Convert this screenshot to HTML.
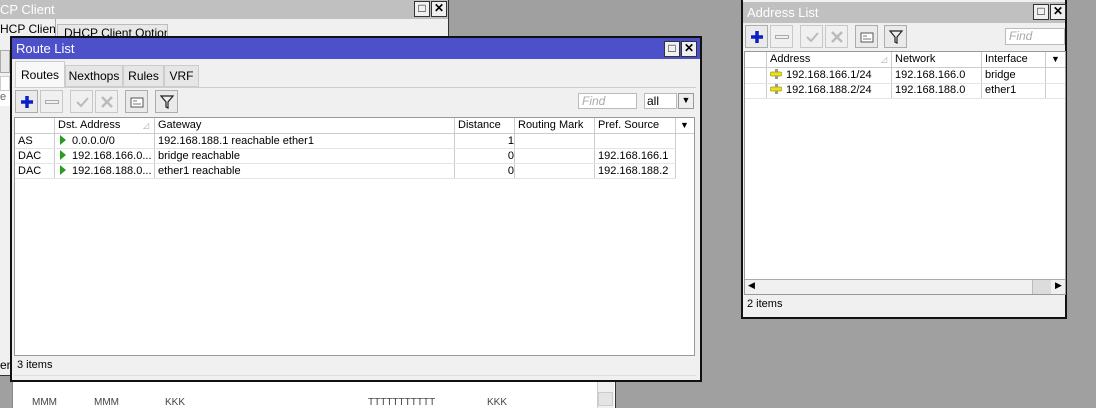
<!DOCTYPE html>
<html><head><meta charset="utf-8"><style>
*{box-sizing:border-box;margin:0;padding:0}
body{width:1096px;height:406px;background:#a0a0a0;position:relative;overflow:hidden;font-family:"Liberation Sans",sans-serif;font-size:11px;color:#000}
.a{position:absolute;white-space:nowrap}
.btnw{position:absolute;width:16px;height:16px;border:1px solid #333;background:#f0f0f0;font-size:12px;line-height:13px;text-align:center;font-weight:bold}
.tb{position:absolute;width:23px;height:23px;border:1px solid #adadad;background:#eaeaea;display:flex;align-items:center;justify-content:center}
.tb.d{background:#f0f0f0;border-color:#c8c8c8}
.cell{position:absolute;white-space:nowrap;overflow:hidden;height:15px;line-height:15px;padding-left:3px}
.hl{border-right:1px solid #ccc}
.tri{display:inline-block;width:0;height:0;border-top:5px solid transparent;border-bottom:5px solid transparent;border-left:6px solid #2a9c1f;vertical-align:-1px;margin:0 6px 0 2px}
</style></head><body>

<!-- bottom background window -->
<div class="a" style="left:12px;top:378px;width:604px;height:30px;background:#fff;border-left:1px solid #888;border-right:1px solid #333"></div>
<div class="a" style="left:597px;top:378px;width:17px;height:30px;background:#f0f0f0;border-left:1px solid #ccc"></div>
<div class="a" style="left:598px;top:392px;width:15px;height:14px;background:#e4e4e4;border:1px solid #ccc"></div>
<div class="a" style="left:32px;top:397px;font-size:10px;color:#444">MMM</div>
<div class="a" style="left:94px;top:397px;font-size:10px;color:#444">MMM</div>
<div class="a" style="left:165px;top:397px;font-size:10px;color:#444">KKK</div>
<div class="a" style="left:368px;top:397px;font-size:10px;color:#444">TTTTTTTTTTT</div>
<div class="a" style="left:487px;top:397px;font-size:10px;color:#444">KKK</div>

<!-- DHCP client window -->
<div class="a" style="left:-2px;top:0;width:451px;height:376px;background:#f0f0f0;border:1px solid #333"></div>
<div class="a" style="left:-1px;top:0;width:449px;height:19px;background:#c0c0c0"></div>
<div class="a" style="left:0;top:1px;color:#fff;font-size:13px;line-height:17px">CP Client</div>
<div class="btnw" style="left:414px;top:1px">□</div>
<div class="btnw" style="left:431px;top:1px">✕</div>
<div class="a" style="left:0;top:19px;width:56px;height:20px;background:#f0f0f0;border-right:1px solid #aaa;font-size:12px;line-height:20px;overflow:hidden">HCP Client</div>
<div class="a" style="left:57px;top:24px;width:111px;height:14px;background:#e8e8e8;border:1px solid #bbb;font-size:12px;padding-left:6px;line-height:16px;overflow:hidden">DHCP Client Options</div>
<div class="a" style="left:0;top:50px;width:10px;height:23px;border:1px solid #aaa;background:#e8e8e8"></div>
<div class="a" style="left:0;top:76px;width:10px;height:15px;border:1px solid #ccc;background:#fff"></div>
<div class="a" style="left:0;top:91px;width:10px;height:15px;background:#fff;color:#666;font-size:11px">e</div>
<div class="a" style="left:0;top:358px;font-size:12px">em</div>

<!-- Route List window -->
<div class="a" style="left:10px;top:36px;width:692px;height:346px;background:#f0f0f0;border:2px solid #111"></div>
<div class="a" style="left:12px;top:38px;width:688px;height:21px;background:#4c50c9"></div>
<div class="a" style="left:16px;top:40px;color:#fff;font-size:13px;line-height:17px">Route List</div>
<div class="btnw" style="left:664px;top:41px">□</div>
<div class="btnw" style="left:681px;top:41px">✕</div>
<div class="a" style="left:15px;top:61px;width:50px;height:26px;background:#f8f8f8;border:1px solid #ccc;border-bottom:none;font-size:12px;line-height:26px;text-align:center">Routes</div>
<div class="a" style="left:65px;top:65px;width:58px;height:22px;background:#e6e6e6;border:1px solid #ccc;font-size:12px;line-height:21px;text-align:center">Nexthops</div>
<div class="a" style="left:123px;top:65px;width:41px;height:22px;background:#e6e6e6;border:1px solid #ccc;font-size:12px;line-height:21px;text-align:center">Rules</div>
<div class="a" style="left:164px;top:65px;width:35px;height:22px;background:#e6e6e6;border:1px solid #ccc;font-size:12px;line-height:21px;text-align:center">VRF</div>
<div class="a" style="left:14px;top:87px;width:682px;height:1px;background:#ccc"></div>

<div class="tb" style="left:15px;top:90px"><svg width="14" height="14"><path d="M7 1V13M1 7H13" stroke="#0a1fc4" stroke-width="3.5"/></svg></div>
<div class="tb d" style="left:40px;top:90px"><div style="width:14px;height:4px;border:1px solid #aaa"></div></div>
<div class="tb d" style="left:70px;top:90px"><svg width="14" height="14"><path d="M2 7L6 11L13 3" stroke="#bbb" stroke-width="2" fill="none"/></svg></div>
<div class="tb d" style="left:95px;top:90px"><svg width="14" height="14"><path d="M2 2L12 12M12 2L2 12" stroke="#bbb" stroke-width="2.5"/></svg></div>
<div class="tb" style="left:125px;top:90px"><svg width="14" height="12"><rect x="1" y="2" width="12" height="9" fill="#fff" stroke="#555"/><path d="M3 5H7M3 8H11" stroke="#777"/></svg></div>
<div class="tb" style="left:155px;top:90px"><svg width="14" height="14"><path d="M1 1H13L8 7V13L6 12V7Z" fill="#eee" stroke="#222" stroke-width="1.2"/></svg></div>

<div class="a" style="left:578px;top:93px;width:59px;height:16px;background:#fff;border:1px solid #bbb;color:#aaa;font-style:italic;font-size:12px;padding-left:3px;line-height:14px">Find</div>
<div class="a" style="left:644px;top:93px;width:33px;height:16px;background:#fff;border:1px solid #bbb;font-size:12px;padding-left:2px;line-height:14px">all</div>
<div class="a" style="left:678px;top:93px;width:16px;height:16px;background:#eee;border:1px solid #999;font-size:9px;text-align:center;line-height:13px">&#9660;</div>

<div class="a" style="left:14px;top:117px;width:681px;height:239px;background:#fff;border:1px solid #999"></div>
<div class="a" style="left:15px;top:118px;width:679px;height:16px;background:#fff;border-bottom:1px solid #ccc"></div>
<div class="cell hl" style="left:15px;top:118px;width:40px;height:61px"></div>
<div class="cell hl" style="left:55px;top:118px;width:100px;height:61px">Dst. Address<span style="position:absolute;left:88px;color:#aaa;font-size:8px">◿</span></div>
<div class="cell hl" style="left:155px;top:118px;width:300px;height:61px">Gateway</div>
<div class="cell hl" style="left:455px;top:118px;width:60px;height:61px">Distance</div>
<div class="cell hl" style="left:515px;top:118px;width:80px;height:61px">Routing Mark</div>
<div class="cell hl" style="left:595px;top:118px;width:81px;height:61px">Pref. Source</div>
<div class="a" style="left:680px;top:118px;font-size:9px;line-height:15px">&#9660;</div>
<div class="a" style="left:15px;top:148px;width:661px;height:1px;background:#e4e4e4"></div>
<div class="a" style="left:15px;top:163px;width:661px;height:1px;background:#e4e4e4"></div>
<div class="a" style="left:15px;top:178px;width:661px;height:1px;background:#e4e4e4"></div>

<div class="cell" style="left:15px;top:134px">AS</div>
<div class="cell" style="left:55px;top:134px"><span class="tri"></span>0.0.0.0/0</div>
<div class="cell" style="left:155px;top:134px">192.168.188.1 reachable ether1</div>
<div class="cell" style="left:455px;top:134px;width:59px;text-align:right">1</div>
<div class="cell" style="left:15px;top:149px">DAC</div>
<div class="cell" style="left:55px;top:149px;width:99px"><span class="tri"></span>192.168.166.0...</div>
<div class="cell" style="left:155px;top:149px">bridge reachable</div>
<div class="cell" style="left:455px;top:149px;width:59px;text-align:right">0</div>
<div class="cell" style="left:595px;top:149px">192.168.166.1</div>
<div class="cell" style="left:15px;top:164px">DAC</div>
<div class="cell" style="left:55px;top:164px;width:99px"><span class="tri"></span>192.168.188.0...</div>
<div class="cell" style="left:155px;top:164px">ether1 reachable</div>
<div class="cell" style="left:455px;top:164px;width:59px;text-align:right">0</div>
<div class="cell" style="left:595px;top:164px">192.168.188.2</div>
<div class="a" style="left:17px;top:359px;font-size:11px">3 items</div>
<div class="a" style="left:14px;top:375px;width:682px;height:1px;background:#ddd"></div>

<!-- Address List window -->
<div class="a" style="left:741px;top:0;width:326px;height:319px;background:#f0f0f0;border:2px solid #111;border-top:none"></div>
<div class="a" style="left:743px;top:2px;width:322px;height:21px;background:#c0c0c0"></div>
<div class="a" style="left:747px;top:4px;color:#fff;font-size:13px;line-height:17px">Address List</div>
<div class="btnw" style="left:1033px;top:4px">□</div>
<div class="btnw" style="left:1050px;top:4px">✕</div>
<div class="tb" style="left:745px;top:25px"><svg width="14" height="14"><path d="M7 1V13M1 7H13" stroke="#0a1fc4" stroke-width="3.5"/></svg></div>
<div class="tb d" style="left:770px;top:25px"><div style="width:14px;height:4px;border:1px solid #aaa"></div></div>
<div class="tb d" style="left:800px;top:25px"><svg width="14" height="14"><path d="M2 7L6 11L13 3" stroke="#bbb" stroke-width="2" fill="none"/></svg></div>
<div class="tb d" style="left:825px;top:25px"><svg width="14" height="14"><path d="M2 2L12 12M12 2L2 12" stroke="#bbb" stroke-width="2.5"/></svg></div>
<div class="tb" style="left:855px;top:25px"><svg width="14" height="12"><rect x="1" y="2" width="12" height="9" fill="#fff" stroke="#555"/><path d="M3 5H7M3 8H11" stroke="#777"/></svg></div>
<div class="tb" style="left:884px;top:25px"><svg width="14" height="14"><path d="M1 1H13L8 7V13L6 12V7Z" fill="#eee" stroke="#222" stroke-width="1.2"/></svg></div>
<div class="a" style="left:1005px;top:28px;width:60px;height:17px;background:#fff;border:1px solid #bbb;color:#aaa;font-style:italic;font-size:12px;padding-left:3px;line-height:15px">Find</div>

<div class="a" style="left:744px;top:51px;width:322px;height:244px;background:#fff;border:1px solid #999"></div>
<div class="a" style="left:745px;top:52px;width:320px;height:16px;border-bottom:1px solid #ccc"></div>
<div class="cell hl" style="left:745px;top:52px;width:22px;height:46px"></div>
<div class="cell hl" style="left:767px;top:52px;width:125px;height:46px">Address<span style="position:absolute;left:114px;color:#aaa;font-size:8px">◿</span></div>
<div class="cell hl" style="left:892px;top:52px;width:90px;height:46px">Network</div>
<div class="cell hl" style="left:982px;top:52px;width:64px;height:46px">Interface</div>
<div class="a" style="left:1051px;top:52px;font-size:9px;line-height:15px">&#9660;</div>
<div class="a" style="left:745px;top:83px;width:320px;height:1px;background:#e4e4e4"></div>
<div class="a" style="left:745px;top:98px;width:320px;height:1px;background:#e4e4e4"></div>
<div class="cell" style="left:767px;top:68px"><svg width="12" height="10" style="vertical-align:-1px;margin-right:4px"><rect x="5" y="0" width="3" height="10" fill="#999"/><rect x="0" y="3" width="12" height="4" rx="2" fill="#e8e020" stroke="#aa9900" stroke-width=".8"/></svg>192.168.166.1/24</div>
<div class="cell" style="left:892px;top:68px">192.168.166.0</div>
<div class="cell" style="left:982px;top:68px">bridge</div>
<div class="cell" style="left:767px;top:83px"><svg width="12" height="10" style="vertical-align:-1px;margin-right:4px"><rect x="5" y="0" width="3" height="10" fill="#999"/><rect x="0" y="3" width="12" height="4" rx="2" fill="#e8e020" stroke="#aa9900" stroke-width=".8"/></svg>192.168.188.2/24</div>
<div class="cell" style="left:892px;top:83px">192.168.188.0</div>
<div class="cell" style="left:982px;top:83px">ether1</div>
<div class="a" style="left:745px;top:279px;width:320px;height:15px;background:#f0f0f0;border-top:1px solid #aaa"></div>
<div class="a" style="left:748px;top:280px;font-size:9px">&#9664;</div>
<div class="a" style="left:1032px;top:280px;width:19px;height:14px;background:#dcdcdc;border-left:1px solid #bbb"></div>
<div class="a" style="left:1055px;top:280px;font-size:9px">&#9654;</div>
<div class="a" style="left:747px;top:298px;font-size:11px">2 items</div>
</body></html>
